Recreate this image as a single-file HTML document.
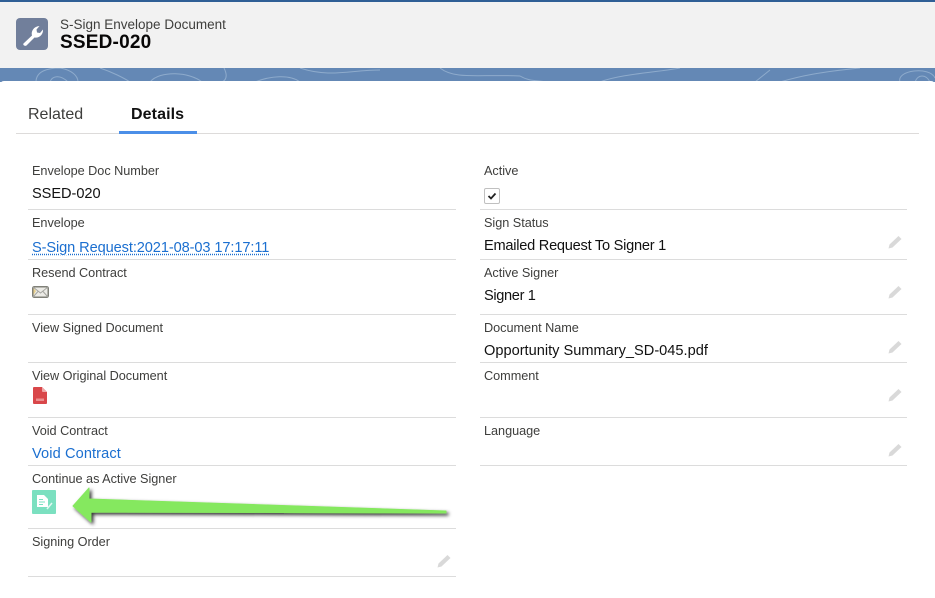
<!DOCTYPE html>
<html>
<head>
<meta charset="utf-8">
<style>
html,body{margin:0;padding:0;background:#fff}
body{width:935px;height:598px;position:relative;overflow:hidden;font-family:"Liberation Sans",sans-serif;color:#181818}
#w{position:absolute;left:0;top:0;width:935px;height:598px;filter:blur(.35px)}
.a{position:absolute;white-space:nowrap}
.l{font-size:12.7px;color:#3e3e3c;line-height:16px;letter-spacing:-.03px}
.v{font-size:14.6px;color:#111;line-height:20px}
.k{color:#1b6fd0}
.h{position:absolute;height:1px;background:#dcdcdc}
svg.p{position:absolute;width:16px;height:16px}
</style>
</head>
<body>
<div id="w">
<div class="a" style="left:0;top:0;width:935px;height:68px;background:#f2f2f2;border-top:2px solid #2f5f96;box-sizing:border-box"></div>
<div class="a" style="left:0;top:68px;width:935px;height:14px;background:#6488b5"></div>
<svg class="a" style="left:0;top:68px" width="935" height="14" fill="none" stroke="#8eabcc" stroke-width="1">
<path d="M36 14C36 3 48 0 60 0C72 2 78 8 78 14M50 14C52 8 60 6 68 14M100 0C112 4 124 10 130 14M150 14C160 2 190 4 202 14M224 0C228 8 226 12 222 14M300 0C330 10 350 2 380 2M440 0C455 12 480 6 520 8C530 14 540 12 545 14M600 14C620 6 660 4 680 0M780 14C800 8 820 4 860 0M900 14C896 2 930 -2 935 10M915 14C918 6 926 6 930 14M255 14C270 8 290 6 300 14M770 2L755 14"/>
</svg>
<div class="a" style="left:0;top:81px;width:935px;height:517px;background:#fff;border-radius:4px 4px 0 0"></div>

<div class="a" style="left:16px;top:18px;width:32px;height:32px;background:#717f9b;border-radius:4px"></div>
<svg class="a" style="left:16px;top:18px" width="32" height="32" viewBox="0 0 32 32">
<path d="M7.5 25.5L16 17.5C14.8 13.5 17.5 8.5 23.5 8L20.5 11.5L21 14.5L24 15L27 11.5C27.5 16.5 23 20.5 18.5 19.5L10.5 27.5C9 28.5 6.5 27 7.5 25.5Z" fill="#fff"/>
</svg>
<div class="a" style="left:60px;top:17px;font-size:13.5px;line-height:16px;color:#3e3e3c">S-Sign Envelope Document</div>
<div class="a" style="left:60px;top:32px;font-size:19px;line-height:22px;font-weight:bold;color:#080707;letter-spacing:.2px">SSED-020</div>

<div class="a" style="left:28px;top:105px;font-size:16px;line-height:20px;color:#3e3e3c">Related</div>
<div class="a" style="left:131px;top:105px;font-size:16px;line-height:20px;font-weight:bold;color:#111;letter-spacing:.1px">Details</div>
<div class="h" style="left:16px;top:133px;width:903px;background:#dddbda"></div>
<div class="a" style="left:119px;top:131px;width:78px;height:3px;background:#4b8fe8"></div>

<!-- Left column -->
<div class="a l" style="left:32px;top:163px">Envelope Doc Number</div>
<div class="a v" style="left:32px;top:184px;letter-spacing:-.05px">SSED-020</div>
<div class="h" style="left:28px;top:209px;width:428px"></div>
<div class="a l" style="left:32px;top:215px">Envelope</div>
<div class="a v k" style="left:32px;top:238px;letter-spacing:-.1px;text-decoration:underline dotted #1b6fd0;text-underline-offset:2px">S-Sign Request:2021-08-03 17:17:11</div>
<div class="h" style="left:28px;top:259px;width:428px"></div>
<div class="a l" style="left:32px;top:265px">Resend Contract</div>
<svg class="a" style="left:32px;top:286px" width="17" height="12" viewBox="0 0 17 12">
<rect x=".75" y=".75" width="15.5" height="10.5" rx="1.5" fill="#ecebe6" stroke="#808078" stroke-width="1.5"/>
<path d="M1 1L8.5 7L16 1M1 11L6 5.5M16 11L11 5.5" fill="none" stroke="#a5a5a0"/>
<path d="M1.5 2L4 5L1.5 9Z" fill="#e8cf8c"/>
</svg>
<div class="h" style="left:28px;top:314px;width:428px"></div>
<div class="a l" style="left:32px;top:320px">View Signed Document</div>
<div class="h" style="left:28px;top:362px;width:428px"></div>
<div class="a l" style="left:32px;top:368px">View Original Document</div>
<svg class="a" style="left:33px;top:387px" width="14" height="17" viewBox="0 0 14 17">
<path d="M1 0H9L14 5V16a1 1 0 0 1-1 1H1a1 1 0 0 1-1-1V1a1 1 0 0 1 1-1Z" fill="#d9474a"/>
<path d="M9 0L14 5H10a1 1 0 0 1-1-1Z" fill="#f0a8a8"/>
<rect x="3" y="11.5" width="8" height="2.5" fill="#eb8f8f"/>
</svg>
<div class="h" style="left:28px;top:417px;width:428px"></div>
<div class="a l" style="left:32px;top:423px">Void Contract</div>
<div class="a v k" style="left:32px;top:444px;letter-spacing:.1px">Void Contract</div>
<div class="h" style="left:28px;top:465px;width:428px"></div>
<div class="a l" style="left:32px;top:471px">Continue as Active Signer</div>
<div class="a" style="left:32px;top:490px;width:24px;height:24px;background:#7be0c0;border-radius:1px"></div>
<svg class="a" style="left:32px;top:490px" width="24" height="24" viewBox="0 0 24 24">
<path d="M5 5H12L16 9V17H5Z" fill="#fff"/>
<path d="M7 9.5H11M7 12H13M7 14.5H11" stroke="#7be0c0" stroke-width="1.1"/>
<path d="M15 19L20 13" stroke="#e4f8f1" stroke-width="1.5"/>
</svg>
<div class="h" style="left:28px;top:528px;width:428px"></div>
<div class="a l" style="left:32px;top:534px">Signing Order</div>
<div class="h" style="left:28px;top:576px;width:428px"></div>

<!-- Arrow -->
<svg class="a" style="left:65px;top:480px" width="395" height="50" viewBox="0 0 395 50">
<defs><filter id="s" x="-5%" y="-30%" width="110%" height="170%"><feDropShadow dx="2" dy="2" stdDeviation="1.8" flood-color="#000" flood-opacity=".8"/></filter></defs>
<path d="M8 26L24 8V19L381 31V33L26 32V42Z" fill="#85e85e" stroke="#85e85e" stroke-linejoin="round" filter="url(#s)"/>
</svg>

<!-- Right column -->
<div class="a l" style="left:484px;top:163px">Active</div>
<div class="a" style="left:484px;top:188px;width:14px;height:14px;border:1px solid #c0c0c0;border-radius:2px;background:#fff"></div>
<svg class="a" style="left:484px;top:188px" width="16" height="16" viewBox="0 0 16 16"><path d="M4.5 8L7 10.5L11.5 5.5" fill="none" stroke="#222" stroke-width="1.8"/></svg>
<div class="h" style="left:480px;top:209px;width:427px"></div>
<div class="a l" style="left:484px;top:215px">Sign Status</div>
<div class="a v" style="left:484px;top:236px;letter-spacing:-.25px">Emailed Request To Signer 1</div>
<div class="h" style="left:480px;top:259px;width:427px"></div>
<div class="a l" style="left:484px;top:265px">Active Signer</div>
<div class="a v" style="left:484px;top:286px;letter-spacing:-.35px">Signer 1</div>
<div class="h" style="left:480px;top:314px;width:427px"></div>
<div class="a l" style="left:484px;top:320px">Document Name</div>
<div class="a v" style="left:484px;top:341px">Opportunity Summary_SD-045.pdf</div>
<div class="h" style="left:480px;top:362px;width:427px"></div>
<div class="a l" style="left:484px;top:368px">Comment</div>
<div class="h" style="left:480px;top:417px;width:427px"></div>
<div class="a l" style="left:484px;top:423px">Language</div>
<div class="h" style="left:480px;top:465px;width:427px"></div>

<!-- Pencils -->
<svg class="p" style="left:887px;top:234px" viewBox="0 0 16 16"><path d="M1.5 14.5L2.5 10.5L11.5 2L14.5 5L5.5 13.5Z" fill="#d9d9d9"/></svg>
<svg class="p" style="left:887px;top:284px" viewBox="0 0 16 16"><path d="M1.5 14.5L2.5 10.5L11.5 2L14.5 5L5.5 13.5Z" fill="#d9d9d9"/></svg>
<svg class="p" style="left:887px;top:339px" viewBox="0 0 16 16"><path d="M1.5 14.5L2.5 10.5L11.5 2L14.5 5L5.5 13.5Z" fill="#d9d9d9"/></svg>
<svg class="p" style="left:887px;top:387px" viewBox="0 0 16 16"><path d="M1.5 14.5L2.5 10.5L11.5 2L14.5 5L5.5 13.5Z" fill="#d9d9d9"/></svg>
<svg class="p" style="left:887px;top:442px" viewBox="0 0 16 16"><path d="M1.5 14.5L2.5 10.5L11.5 2L14.5 5L5.5 13.5Z" fill="#d9d9d9"/></svg>
<svg class="p" style="left:436px;top:553px" viewBox="0 0 16 16"><path d="M1.5 14.5L2.5 10.5L11.5 2L14.5 5L5.5 13.5Z" fill="#d9d9d9"/></svg>
</div>
</body>
</html>
